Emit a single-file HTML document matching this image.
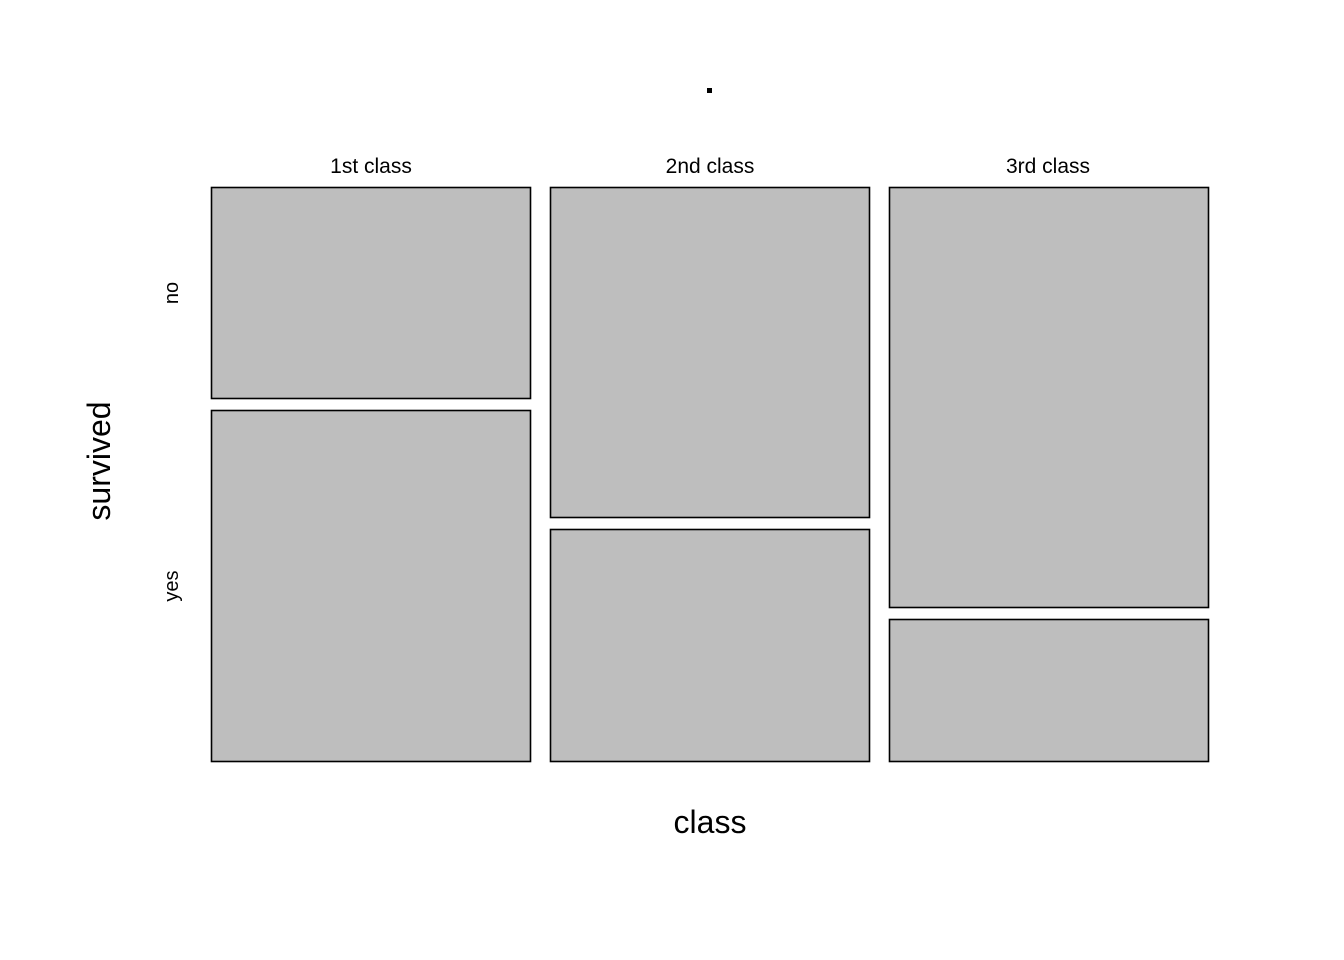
<!DOCTYPE html>
<html><head><meta charset="utf-8"><style>
html,body{margin:0;padding:0;background:#fff;}
svg{display:block;}
text{font-family:"Liberation Sans",sans-serif;fill:#000;}
</style></head><body>
<svg width="1344" height="960" viewBox="0 0 1344 960" xmlns="http://www.w3.org/2000/svg">
<rect x="0" y="0" width="1344" height="960" fill="#fff"/>
<rect x="707" y="88" width="5" height="5" fill="#000"/>
<g fill="#BEBEBE" stroke="#000" stroke-width="1.6">
<rect x="211.5" y="187.5" width="319" height="211"/>
<rect x="211.5" y="410.5" width="319" height="351"/>
<rect x="550.5" y="187.5" width="319" height="330"/>
<rect x="550.5" y="529.5" width="319" height="232"/>
<rect x="889.5" y="187.5" width="319" height="420"/>
<rect x="889.5" y="619.5" width="319" height="142"/>
</g>
<g font-size="21" text-anchor="middle">
<text x="371" y="173">1st class</text>
<text x="710" y="173">2nd class</text>
<text x="1048" y="173">3rd class</text>
</g>
<text x="710" y="833" font-size="32" text-anchor="middle">class</text>
<text transform="translate(110,461) rotate(-90)" font-size="32" text-anchor="middle">survived</text>
<text transform="translate(178,293) rotate(-90)" font-size="20" text-anchor="middle">no</text>
<text transform="translate(178,586) rotate(-90)" font-size="20" text-anchor="middle">yes</text>
</svg>
</body></html>
